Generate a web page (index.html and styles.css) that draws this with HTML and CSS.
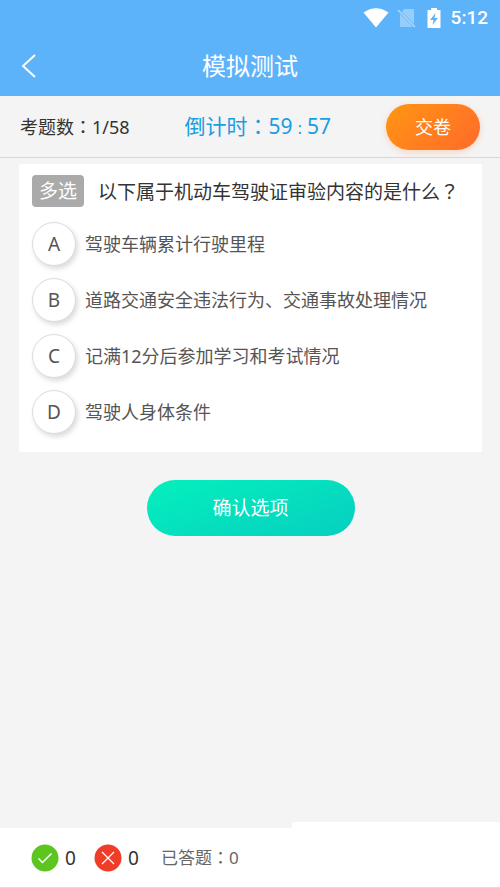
FILE: index.html
```
<!DOCTYPE html>
<html lang="zh-CN">
<head>
<meta charset="utf-8">
<meta name="viewport" content="width=device-width, initial-scale=1">
<title>模拟测试</title>
<link rel="stylesheet" href="styles.css">
</head>
<body>
<header class="header">
  <div class="status">
    <svg class="status-wifi" viewBox="0 0 26 20" aria-hidden="true"><path d="M0.500 4.500Q13-4 25.500 4.500L13 19.500Z" fill="#fff"/></svg>
    <svg class="status-sim" viewBox="0 0 20 20" aria-hidden="true"><path d="M7 1H17V16L5 4ZM3 6L16 19H3Z" fill="#fff" opacity=".35"/><path d="M1 2L18 19" stroke="#fff" stroke-width="1.400" opacity=".5"/></svg>
    <svg class="status-battery" viewBox="0 0 14 20" aria-hidden="true"><path d="M4 0H10V2H13.500V20H0.500V2H4Z" fill="#fff"/><path d="M8.500 5L3 12H6.500L5.500 17L11 10H7.500Z" fill="#5db3fa"/></svg>
    <time class="status-time">5:12</time>
  </div>
  <div class="titlebar">
    <button class="back" type="button" aria-label="返回"><svg viewBox="0 0 16 26" aria-hidden="true"><path d="M14 2L2 13L14 24" fill="none" stroke="#fff" stroke-width="2"/></svg></button>
    <h1 class="title">模拟测试</h1>
  </div>
</header>
<section class="toolbar">
  <p class="count">考题数<span class="colon" lang="ja">：</span>1/58</p>
  <p class="timer">倒计时<span class="colon" lang="ja">：</span>59<span class="tick">:</span>57</p>
  <button class="submit" type="button">交卷</button>
</section>
<main class="main">
  <form class="form">
    <fieldset class="card">
      <legend class="question"><span class="tag">多选</span><span class="question-text">以下属于机动车驾驶证审验内容的是什么<span class="colon" lang="ja">？</span></span></legend>
      <div class="options">
        <label class="option"><span class="mark"><input type="checkbox" name="answer" value="A"><span class="letter">A</span></span>驾驶车辆累计行驶里程</label>
        <label class="option"><span class="mark"><input type="checkbox" name="answer" value="B"><span class="letter">B</span></span>道路交通安全违法行为、交通事故处理情况</label>
        <label class="option"><span class="mark"><input type="checkbox" name="answer" value="C"><span class="letter">C</span></span>记满12分后参加学习和考试情况</label>
        <label class="option"><span class="mark"><input type="checkbox" name="answer" value="D"><span class="letter">D</span></span>驾驶人身体条件</label>
      </div>
    </fieldset>
    <button class="confirm" type="button">确认选项</button>
  </form>
</main>
<footer class="footer">
  <div class="score">
    <span class="tally"><svg viewBox="0 0 28 28" aria-hidden="true"><circle cx="14" cy="14" r="13.500" fill="#5dc520"/><path d="M7.500 14.500L11.500 18.500L20.500 9.500" fill="none" stroke="#fff" stroke-width="1.500"/></svg>0</span>
    <span class="tally"><svg viewBox="0 0 28 28" aria-hidden="true"><circle cx="14" cy="14" r="13.500" fill="#f03d28"/><path d="M8 8L20 20M20 8L8 20" fill="none" stroke="#fff" stroke-width="1.200"/></svg>0</span>
    <span class="answered">已答题<span class="colon" lang="ja">：</span>0</span>
  </div>
  <div class="footer-side"></div>
</footer>
</body>
</html>
```
FILE: styles.css
```
* { box-sizing: border-box; }

body {
  margin: 0;
  min-height: 100vh;
  display: flex;
  flex-direction: column;
  background: #f4f4f4;
  color: #333;
  font-family: "Noto Sans", "Noto Sans CJK SC", sans-serif;
  font-size: 18px;
  line-height: 24px;
}

h1, p { margin: 0; font-weight: 400; }

button {
  border: 0;
  padding: 0;
  color: #fff;
  font: inherit;
  cursor: pointer;
}

/* Full-width punctuation centred in its box */
.colon { font-family: "Noto Sans CJK JP", sans-serif; }

.header { background: #5db3fa; color: #fff; }

.status {
  display: flex;
  justify-content: flex-end;
  align-items: center;
  height: 36px;
  padding-right: 12px;
}
.status-wifi { width: 26px; height: 20px; margin-right: 8px; }
.status-sim { width: 20px; height: 20px; margin-right: 10px; }
.status-battery { width: 14px; height: 20px; margin-right: 10px; }
.status-time { font: 500 19px/24px Roboto, sans-serif; }

.titlebar {
  display: grid;
  grid-template-columns: 60px 1fr 60px;
  align-items: center;
  height: 60px;
}
.back { height: 60px; background: none; }
.back svg { display: block; width: 16px; height: 26px; margin-left: 21px; }
.title { font-size: 24px; line-height: 30px; text-align: center; }

.toolbar {
  display: flex;
  align-items: center;
  justify-content: space-between;
  height: 62px;
  padding: 0 20px;
  border-bottom: 1px solid #d8d8d8;
}
.timer { color: #1a9ee0; font-size: 21px; }
.tick { padding: 0 5px; font-size: 16px; }
.submit {
  width: 94px;
  height: 46px;
  border-radius: 23px;
  background: linear-gradient(135deg, #ff9612, #ff6a2b);
  box-shadow: 0 2px 6px rgba(255, 120, 30, .25);
}

.main { flex: 1; padding: 6px 18px 0 19px; }
.form { display: flex; flex-direction: column; align-items: center; }

.card {
  width: 100%;
  min-width: 0;
  margin: 0;
  padding: 11px 12px 18px 13px;
  border: 0;
  background: #fff;
}
.question {
  float: left;
  display: flex;
  align-items: center;
  gap: 14px;
  width: 100%;
  padding: 0;
  font-size: 19px;
}
.tag {
  flex: none;
  padding: 4px 7px;
  border-radius: 4px;
  background: #aaa;
  color: #fff;
}

.options {
  clear: both;
  display: flex;
  flex-direction: column;
  gap: 12px;
  padding-top: 15px;
}
.option {
  display: flex;
  align-items: center;
  gap: 9px;
  color: #555;
}
.mark {
  flex: none;
  display: grid;
  place-items: center;
  width: 44px;
  height: 44px;
  font-size: 19px;
}
.mark > * { grid-area: 1 / 1; }
.mark input {
  appearance: none;
  width: 44px;
  height: 44px;
  margin: 0;
  border: 1px solid #dcdcdc;
  border-radius: 50%;
  background: #fff;
  box-shadow: 2px 3px 5px rgba(0, 0, 0, .14);
}
.mark input:checked { background: #d5f7ef; }
.letter { z-index: 1; }

.confirm {
  width: 208px;
  height: 56px;
  margin-top: 28px;
  border-radius: 28px;
  background: linear-gradient(160deg, #04f0bd, #06cfc0);
  font-size: 19px;
}

.footer {
  display: grid;
  grid-template-columns: 7fr 5fr;
  align-items: end;
  border-bottom: 1px solid #ddd;
}
.score {
  display: flex;
  align-items: center;
  height: 59px;
  padding-left: 31px;
  background: #fff;
}
.tally {
  display: flex;
  align-items: center;
  gap: 6px;
  width: 63px;
  font-size: 19px;
}
.tally svg { width: 28px; height: 28px; }
.answered { margin-left: 4px; color: #666; font-size: 17px; }
.footer-side { height: 65px; background: #fff; }
```
